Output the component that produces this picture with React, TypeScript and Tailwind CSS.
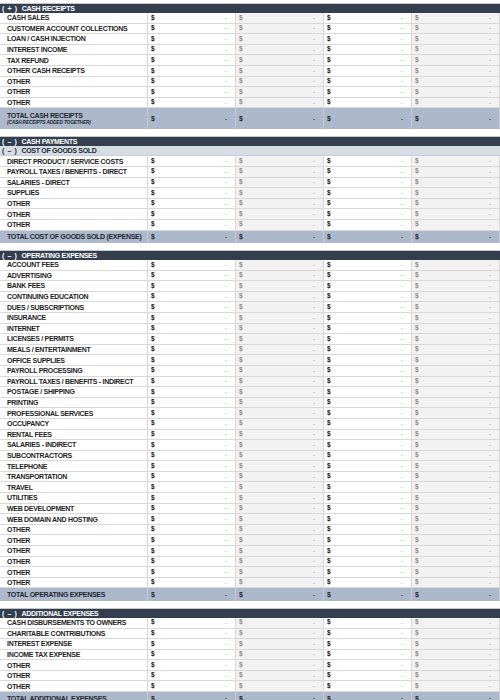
// Cash flow statement sheet (first page)
const FONT = "font-['Liberation_Sans',Arial,sans-serif]"

const RECEIPTS = [
  'CASH SALES',
  'CUSTOMER ACCOUNT COLLECTIONS',
  'LOAN / CASH INJECTION',
  'INTEREST INCOME',
  'TAX REFUND',
  'OTHER CASH RECEIPTS',
  'OTHER',
  'OTHER',
  'OTHER',
]

const COGS = [
  'DIRECT PRODUCT / SERVICE COSTS',
  'PAYROLL TAXES / BENEFITS - DIRECT',
  'SALARIES - DIRECT',
  'SUPPLIES',
  'OTHER',
  'OTHER',
  'OTHER',
]

const OPERATING = [
  'ACCOUNT FEES',
  'ADVERTISING',
  'BANK FEES',
  'CONTINUING EDUCATION',
  'DUES / SUBSCRIPTIONS',
  'INSURANCE',
  'INTERNET',
  'LICENSES / PERMITS',
  'MEALS / ENTERTAINMENT',
  'OFFICE SUPPLIES',
  'PAYROLL PROCESSING',
  'PAYROLL TAXES / BENEFITS - INDIRECT',
  'POSTAGE / SHIPPING',
  'PRINTING',
  'PROFESSIONAL SERVICES',
  'OCCUPANCY',
  'RENTAL FEES',
  'SALARIES - INDIRECT',
  'SUBCONTRACTORS',
  'TELEPHONE',
  'TRANSPORTATION',
  'TRAVEL',
  'UTILITIES',
  'WEB DEVELOPMENT',
  'WEB DOMAIN AND HOSTING',
  'OTHER',
  'OTHER',
  'OTHER',
  'OTHER',
  'OTHER',
  'OTHER',
]

const ADDITIONAL = [
  'CASH DISBURSEMENTS TO OWNERS',
  'CHARITABLE CONTRIBUTIONS',
  'INTEREST EXPENSE',
  'INCOME TAX EXPENSE',
  'OTHER',
  'OTHER',
  'OTHER',
]

const GRID = 'grid grid-cols-[148px_repeat(4,1fr)]'
const LABEL = 'text-[7px] font-bold tracking-[-0.3px] leading-none whitespace-nowrap'

function SectionHeader({ sign, title }: { sign: string; title: string }) {
  return (
    <div className={`flex h-[10px] items-center gap-[4px] border-t border-[#c8c8c8] bg-[#333f4f] pl-[2px] text-white ${LABEL}`}>
      <span className="tracking-[0.6px]">(&nbsp;{sign}&nbsp;)</span>
      <span>{title}</span>
    </div>
  )
}

function SubHeader({ title }: { title: string }) {
  return (
    <div className={`flex h-[10.5px] items-center gap-[4px] border-b border-[#c9d0da] bg-[#d6dce4] pl-[2px] text-[#222b36] ${LABEL}`}>
      <span className="tracking-[0.6px]">(&nbsp;–&nbsp;)</span>
      <span>{title}</span>
    </div>
  )
}

function Row({ label }: { label: string }) {
  return (
    <div className={`${GRID} h-[10.6px] border-b border-[#d9d9d9]`}>
      <div className={`flex items-center border-r border-[#d9d9d9] pl-[7px] text-[#1f1f1f] ${LABEL}`}>{label}</div>
      {[0, 1, 2, 3].map(i => (
        <div
          key={i}
          className={`flex items-center justify-between border-r border-[#d9d9d9] pl-[3px] pr-[8px] leading-none ${i % 2 ? 'bg-[#f2f2f2] text-[#8a8a8a]' : 'bg-white text-[#111]'}`}
        >
          <span className="text-[6.5px] font-bold">$</span>
          <span className="text-[6px] text-[#8a8a8a]">-</span>
        </div>
      ))}
    </div>
  )
}

function Total({ label, note }: { label: string; note?: string }) {
  return (
    <div className={`${GRID} ${note ? 'h-[20.5px]' : 'h-[12.5px]'} bg-[#acb9ca]`}>
      <div className="flex flex-col justify-center gap-[2px] border-r border-[#c3ccd8] pl-[7px] text-[#1f2733]">
        <span className={LABEL}>{label}</span>
        {note && <span className="text-[4.8px] font-bold italic leading-none tracking-[-0.15px]">{note}</span>}
      </div>
      {[0, 1, 2, 3].map(i => (
        <div key={i} className="flex items-center justify-between border-r border-[#c3ccd8] pl-[3px] pr-[8px] leading-none text-[#1f2733]">
          <span className="text-[7px] font-bold">$</span>
          <span className="text-[6px] font-bold">-</span>
        </div>
      ))}
    </div>
  )
}

export default function App() {
  return (
    <div className={`min-h-[700px] w-[500px] bg-white pt-[3px] ${FONT}`}>
      <div className="flex flex-col gap-[7px]">
        <section>
          <SectionHeader sign="+" title="CASH RECEIPTS" />
          {RECEIPTS.map((l, i) => <Row key={i} label={l} />)}
          <Total label="TOTAL CASH RECEIPTS" note="(CASH RECEIPTS ADDED TOGETHER)" />
        </section>

        <section>
          <SectionHeader sign="–" title="CASH PAYMENTS" />
          <SubHeader title="COST OF GOODS SOLD" />
          {COGS.map((l, i) => <Row key={i} label={l} />)}
          <Total label="TOTAL COST OF GOODS SOLD (EXPENSE)" />
        </section>

        <section>
          <SectionHeader sign="–" title="OPERATING EXPENSES" />
          {OPERATING.map((l, i) => <Row key={i} label={l} />)}
          <Total label="TOTAL OPERATING EXPENSES" />
        </section>

        <section>
          <SectionHeader sign="–" title="ADDITIONAL EXPENSES" />
          {ADDITIONAL.map((l, i) => <Row key={i} label={l} />)}
          <Total label="TOTAL ADDITIONAL EXPENSES" />
        </section>
      </div>
    </div>
  )
}
